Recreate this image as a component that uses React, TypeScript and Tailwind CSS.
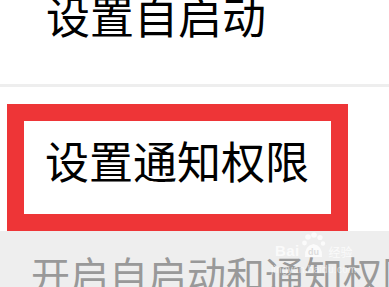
import React from 'react';

const CJK = { fontFamily: '"Noto Sans CJK SC", "Noto Sans", sans-serif' };

const Watermark: React.FC = () => (
  <div className="absolute left-[271px] top-[232px] flex flex-col items-center text-white/75 pointer-events-none">
    <div className="flex items-end">
      <span className="text-[15px] leading-none font-bold tracking-wide mb-[1px]" style={{ fontFamily: '"Liberation Sans", sans-serif' }}>
        Bai
      </span>
      <svg width="26" height="27" viewBox="0 0 26 27">
        <circle cx="8" cy="5" r="2.8" fill="currentColor" />
        <circle cx="14" cy="3" r="2.8" fill="currentColor" />
        <circle cx="20" cy="5.5" r="2.6" fill="currentColor" />
        <circle cx="4.5" cy="11" r="2.4" fill="currentColor" />
        <circle cx="23" cy="11.5" r="2.2" fill="currentColor" />
        <path d="M5 25 Q4 14 13.5 12 Q23 14 22 25 Z" fill="currentColor" />
        <text x="13.5" y="23" fontSize="9" textAnchor="middle" fill="#dddddd" fontFamily="Liberation Sans" fontWeight="bold">du</text>
      </svg>
      <span className="text-[12px] leading-none ml-[3px] mb-[1px]" style={CJK}>经验</span>
    </div>
    <span className="text-[10px] leading-none mt-[6px] text-white/60 tracking-[0.3px]" style={{ fontFamily: '"Liberation Sans", sans-serif' }}>
      jingyan.baidu.com
    </span>
  </div>
);

export default function App() {
  return (
    <div className="relative w-[389px] h-[287px] overflow-hidden bg-white" style={CJK}>
      {/* previous row, clipped at the top */}
      <div className="h-[84px] overflow-hidden pl-[46px]">
        <div className="text-[44px] leading-none text-black -mt-[7px] whitespace-nowrap">设置自启动</div>
      </div>
      <div className="h-[3px] bg-[#eeeeee]" />

      {/* highlighted row */}
      <div className="pt-[17px] pl-[7px]">
        <div className="w-[341px] h-[127px] border-[17px] border-[#ee3537] bg-white pt-[17px] pl-[21px]">
          <div className="text-[44px] leading-none text-black whitespace-nowrap">设置通知权限</div>
        </div>
      </div>

      {/* section header */}
      <div className="bg-[#eeeeee] h-[60px] pt-[23px] pl-[31px]">
        <div className="text-[39px] leading-none text-[#999999] whitespace-nowrap">开启自启动和通知权限</div>
      </div>

      <Watermark />
    </div>
  );
}
